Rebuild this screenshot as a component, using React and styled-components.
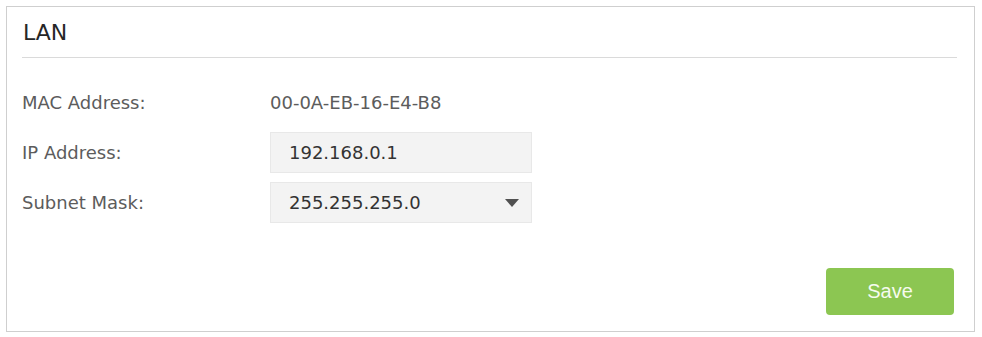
import React from 'react'
import styled, { createGlobalStyle } from 'styled-components'

const GlobalStyle = createGlobalStyle`
  html, body {
    margin: 0;
    padding: 0;
    background: #ffffff;
  }
  body {
    font-family: "DejaVu Sans", Verdana, sans-serif;
  }
`

const Page = styled.div`
  padding: 6px 0 0 6px;
`

const Panel = styled.section`
  width: 969px;
  height: 326px;
  box-sizing: border-box;
  border: 1px solid #cfcfcf;
  padding: 13px 17px 16px 15px;
  display: flex;
  flex-direction: column;
`

const Heading = styled.h2`
  margin: 0;
  font-size: 22px;
  line-height: 26px;
  font-weight: normal;
  color: #262626;
  padding: 0 0 11px 1px;
  border-bottom: 1px solid #dadada;
`

const Form = styled.div`
  margin-top: 24px;
  display: flex;
  flex-direction: column;
  gap: 9px;
`

const Row = styled.div`
  display: grid;
  grid-template-columns: 248px 262px;
  align-items: center;
  height: 41px;
`

const Label = styled.span`
  font-size: 18px;
  color: #5c5c5c;
`

const Value = styled.span`
  font-size: 18px;
  color: #5c5c5c;
`

const Field = styled.div`
  position: relative;
  height: 41px;
  box-sizing: border-box;
  background: #f3f3f3;
  border: 1px solid #e8e8e8;
  padding: 0 18px;
  display: flex;
  align-items: center;
  font-size: 18px;
  color: #333;
`

const Arrow = styled.span`
  position: absolute;
  right: 12px;
  top: 50%;
  margin-top: -4px;
  width: 0;
  height: 0;
  border-left: 7px solid transparent;
  border-right: 7px solid transparent;
  border-top: 8px solid #505050;
`

const Footer = styled.div`
  margin-top: 45px;
  display: flex;
  justify-content: flex-end;
  padding-right: 3px;
`

const SaveButton = styled.button`
  width: 128px;
  height: 47px;
  border: none;
  border-radius: 4px;
  background: #8cc652;
  color: #f6fbef;
  font-family: "Liberation Sans", Arial, sans-serif;
  font-size: 20px;
  cursor: pointer;
`

export default function App() {
  return (
    <>
      <GlobalStyle />
      <Page>
        <Panel>
          <Heading>LAN</Heading>
          <Form>
            <Row>
              <Label>MAC Address:</Label>
              <Value>00-0A-EB-16-E4-B8</Value>
            </Row>
            <Row>
              <Label>IP Address:</Label>
              <Field>192.168.0.1</Field>
            </Row>
            <Row>
              <Label>Subnet Mask:</Label>
              <Field>
                255.255.255.0
                <Arrow />
              </Field>
            </Row>
          </Form>
          <Footer>
            <SaveButton>Save</SaveButton>
          </Footer>
        </Panel>
      </Page>
    </>
  )
}
